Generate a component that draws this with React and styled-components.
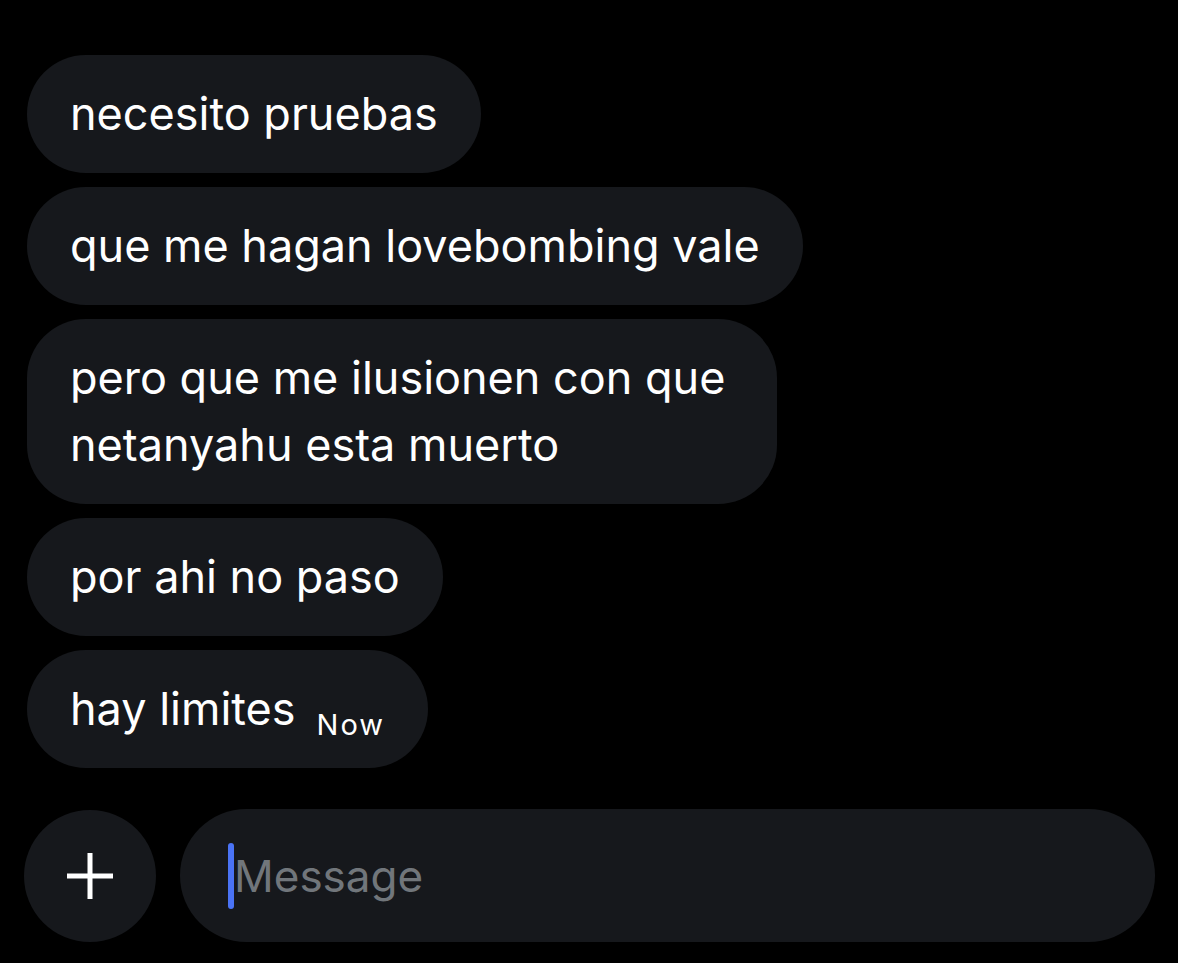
import React from 'react';
import styled, { createGlobalStyle } from 'styled-components';

const GlobalStyle = createGlobalStyle`
  html, body {
    margin: 0;
    padding: 0;
    background: #000;
  }
  body {
    font-family: Inter, "Noto Sans", "Liberation Sans", sans-serif;
    color: #e7e9ea;
  }
`;

const Screen = styled.div`
  width: 1178px;
  height: 963px;
  background: #000;
  display: flex;
  flex-direction: column;
  padding: 55px 23px 0 24px;
  box-sizing: border-box;
`;

const Thread = styled.div`
  display: flex;
  flex-direction: column;
  align-items: flex-start;
  gap: 14px;
  padding-left: 3px;
`;

const Bubble = styled.div`
  background: #16181c;
  color: #ffffff;
  border-radius: 59px;
  padding: 25px 43px 26px 43px;
  font-size: 45px;
  line-height: 67px;
  max-width: ${p => p.$max || 'none'};
  width: ${p => p.$max || 'auto'};
  box-sizing: border-box;
`;

const Time = styled.span`
  font-size: 29px;
  line-height: 1;
  letter-spacing: 2px;
  margin-left: 21px;
  position: relative;
  top: 10px;
`;

const Composer = styled.div`
  display: flex;
  align-items: center;
  gap: 24px;
  margin-top: 41px;
`;

const AddButton = styled.div`
  width: 132px;
  height: 132px;
  border-radius: 50%;
  background: #16181c;
  display: flex;
  align-items: center;
  justify-content: center;
  flex-shrink: 0;
`;

const Input = styled.div`
  flex: 1;
  height: 133px;
  border-radius: 67px;
  background: #16181c;
  display: flex;
  align-items: center;
  padding-left: 48px;
`;

const Caret = styled.span`
  width: 6px;
  height: 66px;
  border-radius: 3px;
  background: #4a73f5;
`;

const Placeholder = styled.span`
  font-size: 44px;
  color: #71767b;
`;

export default function App() {
  return (
    <>
      <GlobalStyle />
      <Screen>
        <Thread>
          <Bubble>necesito pruebas</Bubble>
          <Bubble>que me hagan lovebombing vale</Bubble>
          <Bubble $max="750px">pero que me ilusionen con que netanyahu esta muerto</Bubble>
          <Bubble>por ahi no paso</Bubble>
          <Bubble>
            hay limites<Time>Now</Time>
          </Bubble>
        </Thread>
        <Composer>
          <AddButton>
            <svg width="50" height="50" viewBox="0 0 50 50">
              <path d="M25 2v46M2 25h46" stroke="#fff" strokeWidth="5" />
            </svg>
          </AddButton>
          <Input>
            <Caret />
            <Placeholder>Message</Placeholder>
          </Input>
        </Composer>
      </Screen>
    </>
  );
}
